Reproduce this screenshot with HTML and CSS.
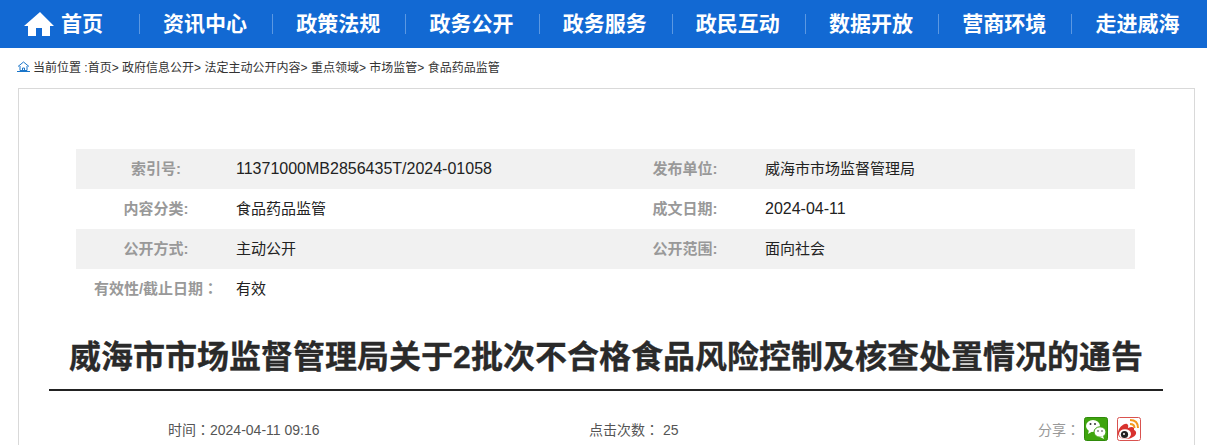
FILE: index.html
```html
<!DOCTYPE html>
<html lang="zh-CN">
<head>
    <meta charset="UTF-8">
    <title>威海市市场监督管理局关于2批次不合格食品风险控制及核查处置情况的通告</title>
    <link rel="stylesheet" href="styles.css">
</head>
<body>
    <!-- 导航 -->
    <nav class="nav">
        <a class="nav-item nav-home" href="#">
            <svg class="home-icon" width="30" height="24" viewBox="0 0 30 24">
                <path d="M16 0 L30 14 H26 V24 H18 V16 H12 V24 H4 V14 H0 Z" fill="#fff"/>
            </svg>
            首页
        </a>
        <a class="nav-item" href="#">资讯中心</a>
        <a class="nav-item" href="#">政策法规</a>
        <a class="nav-item" href="#">政务公开</a>
        <a class="nav-item" href="#">政务服务</a>
        <a class="nav-item" href="#">政民互动</a>
        <a class="nav-item" href="#">数据开放</a>
        <a class="nav-item" href="#">营商环境</a>
        <a class="nav-item" href="#">走进威海</a>
    </nav>

    <!-- 当前位置 -->
    <div class="crumbs">
        <svg class="crumb-icon" width="13" height="11" viewBox="0 0 13 11">
            <path d="M1 5.500 L6.500 1 L12 5.500 M3 5 V9.500 H10 V5 M5.500 9.500 V7 H7.500 V9.500 M0 10.500 H13" fill="none" stroke="#1a75c9" stroke-width="1"/>
        </svg>
        <span>当前位置 :首页&gt;</span>
        <span>政府信息公开&gt;</span>
        <span>法定主动公开内容&gt;</span>
        <span>重点领域&gt;</span>
        <span>市场监管&gt;</span>
        <span>食品药品监管</span>
    </div>

    <div class="panel">
        <div class="meta">
            <div class="meta-row">
                <div class="meta-key">索引号:</div>
                <div class="meta-val meta-num">11371000MB2856435T/2024-01058</div>
                <div class="meta-key">发布单位:</div>
                <div class="meta-val">威海市市场监督管理局</div>
            </div>
            <div class="meta-row">
                <div class="meta-key">内容分类:</div>
                <div class="meta-val">食品药品监管</div>
                <div class="meta-key">成文日期:</div>
                <div class="meta-val meta-num">2024-04-11</div>
            </div>
            <div class="meta-row">
                <div class="meta-key">公开方式:</div>
                <div class="meta-val">主动公开</div>
                <div class="meta-key">公开范围:</div>
                <div class="meta-val">面向社会</div>
            </div>
            <div class="meta-row">
                <div class="meta-key">有效性/截止日期<span class="colon" lang="zh-TW">：</span></div>
                <div class="meta-val">有效</div>
            </div>
        </div>

        <h1 class="title">威海市市场监督管理局关于2批次不合格食品风险控制及核查处置情况的通告</h1>

        <div class="info">
            <span class="info-time">时间<span class="colon" lang="zh-TW">：</span>2024-04-11 09:16</span>
            <span class="info-hits">点击次数<span class="colon" lang="zh-TW">：</span> 25</span>
            <div class="share">
                <span class="share-label">分享<span class="colon" lang="zh-TW">：</span></span>
                <svg class="share-icon" width="24" height="24" viewBox="0 0 24 24">
                    <rect x="0.500" y="0.500" width="23" height="23" rx="2" fill="#3fa40e" stroke="#2f8a0a"/>
                    <ellipse cx="9" cy="9" rx="7" ry="6" fill="#fff"/>
                    <path d="M5 13 L4 17 L9 14 Z" fill="#fff"/>
                    <ellipse cx="16" cy="15" rx="6" ry="5.200" fill="#fff" stroke="#3fa40e"/>
                    <path d="M19 19 L20 22 L16 20 Z" fill="#fff"/>
                    <circle cx="6.500" cy="7" r="1" fill="#333"/>
                    <circle cx="11" cy="7" r="1" fill="#333"/>
                    <circle cx="14" cy="14" r="0.800" fill="#333"/>
                    <circle cx="18" cy="14" r="0.800" fill="#333"/>
                </svg>
                <svg class="share-icon" width="24" height="24" viewBox="0 0 24 24">
                    <rect x="0.500" y="0.500" width="23" height="23" rx="2" fill="#fff" stroke="#d9524f"/>
                    <path d="M1 16 C1 11 7 6 10 7 C12 8 11 10 11 11 C15 9 18 10 17 13 C20 14 20 18 16 20 C12 23 1 23 1 16 Z" fill="#d8322e"/>
                    <ellipse cx="8" cy="17" rx="6" ry="4.800" fill="#fff"/>
                    <circle cx="7.500" cy="17.500" r="3.600" fill="#222"/>
                    <circle cx="7" cy="17" r="1" fill="#fff"/>
                    <path d="M13 3 C18 3 21 6 21 11" fill="none" stroke="#f39a1e" stroke-width="2"/>
                    <path d="M13 7 C16 7 17.500 8.500 17.500 11" fill="none" stroke="#f39a1e" stroke-width="2"/>
                </svg>
            </div>
        </div>
    </div>
</body>
</html>
```

FILE: styles.css
```css
* {
    margin: 0;
    padding: 0;
    box-sizing: border-box;
}

html, body {
    height: 445px;
    overflow: hidden;
}

body {
    font-family: "Liberation Sans", "Noto Sans CJK SC", sans-serif;
    background: #fff;
    color: #333;
}

a {
    text-decoration: none;
}

.nav {
    height: 48px;
    background: #1269d3;
    display: flex;
    align-items: center;
    padding-left: 24px;
}

.nav-item {
    color: #fff;
    font-size: 21px;
    font-weight: bold;
    line-height: 20px;
    width: 133.2px;
    display: flex;
    justify-content: center;
    padding-right: 2px;
    border-left: 1px solid #5b98e2;
}

.nav-home {
    width: 115px;
    border-left: none;
    justify-content: flex-start;
    align-items: center;
    gap: 7px;
    padding-right: 0;
}

.crumbs {
    height: 40px;
    padding: 0 0 3px 17px;
    display: flex;
    align-items: center;
    gap: 3.4px;
    font-size: 12px;
    color: #333;
}

.crumb-icon {
    margin-right: -0.4px;
}

.panel {
    width: 1177px;
    height: 357px;
    margin-left: 18px;
    border: 1px solid #d9d9d9;
    border-bottom: none;
    padding: 60px 30px 0;
}

.meta {
    width: 1059px;
    margin-left: 27px;
}

.meta-row {
    height: 40px;
    display: flex;
    align-items: center;
    padding-bottom: 4px;
    font-size: 15px;
    color: #222;
}

.meta-row:nth-child(odd) {
    background: #f1f1f1;
}

.meta-key {
    width: 160px;
    text-align: center;
    font-weight: bold;
    color: #999;
    white-space: nowrap;
}

.meta-val {
    width: 369px;
}

.meta-num {
    font-size: 16px;
    padding-top: 4px;
}

/* 全角冒号居中 */
.colon {
    font-family: "Noto Sans CJK TC", sans-serif;
}

.title {
    margin-top: 16px;
    height: 66px;
    padding-top: 12px;
    width: 1114px;
    border-bottom: 2px solid #222;
    text-align: center;
    font-size: 32px;
    line-height: 40px;
    color: #2a2a2a;
    white-space: nowrap;
    -webkit-text-stroke: 0.3px #2a2a2a;
}

.info {
    display: flex;
    align-items: center;
    height: 76px;
    font-size: 14px;
    color: #555;
}

.info-time {
    margin-left: 119px;
    width: 421px;
}

.info-hits {
    width: 449px;
}

.share {
    display: flex;
    align-items: center;
    gap: 9px;
    color: #999;
}

.share-label {
    margin-right: -5px;
}

.share-icon {
    display: block;
}
```
